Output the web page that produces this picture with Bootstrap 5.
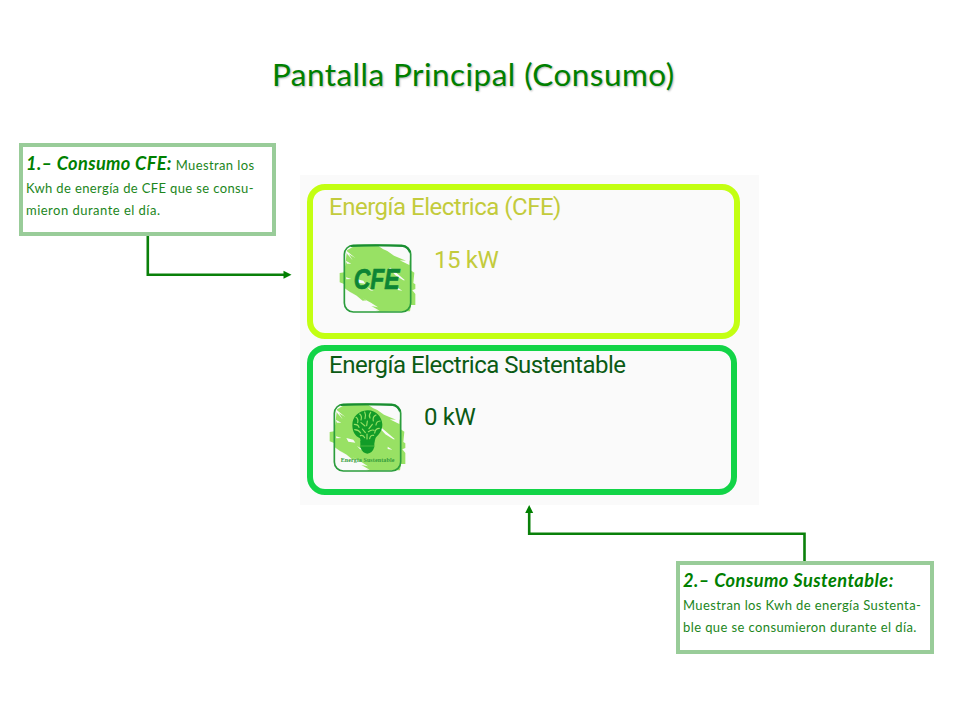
<!DOCTYPE html>
<html lang="es">
<head>
<meta charset="utf-8">
<meta name="viewport" content="width=device-width, initial-scale=1">
<title>Pantalla Principal (Consumo)</title>
<link href="https://cdn.jsdelivr.net/npm/bootstrap@5.3.0/dist/css/bootstrap.min.css" rel="stylesheet">
<style>
body{font-family:Lato,"Liberation Sans",sans-serif;color:#0a800a;background:#fff;width:962px;height:716px;overflow:hidden}
svg{display:block;flex:none}
.slide-title{font-size:31.5px;line-height:40px;padding-top:54px;height:143px;padding-left:272px;color:#008000;letter-spacing:.45px;text-shadow:1px 1px 2px #b5b5b5;white-space:nowrap}
.note span,.note strong,.meter span{display:inline-block;white-space:nowrap}
.upper{height:362px;padding-left:19px}
.side{width:281px}
.note{border:4px solid #99cc99;background:#fff;height:93px;padding:4px 0 0 3px;font-size:13px;line-height:22px;letter-spacing:.4px;color:#1c861c}
.note strong{font-size:18.2px;font-style:italic;font-weight:700;color:#008000;letter-spacing:.45px}
.note-a{width:257px}
.note-a strong{letter-spacing:.35px}
.note-b{width:258px;margin-left:676px;padding-top:3px}
.note .first{height:26px;line-height:24px}
.note-a div:nth-child(2){letter-spacing:.37px}
.note-a div:nth-child(3){letter-spacing:.48px}
.panel{width:459px;height:330px;margin-top:32px;background:#fafafa;padding:9px 0 0 7px;font-family:Roboto,"Liberation Sans",sans-serif}
.meter{border:6px solid #c3ff12;border-radius:18px;color:#c3cb3c;font-size:24px;line-height:28px;letter-spacing:-.49px;padding:3px 0 0 16px}
.meter-a{width:433px;height:155px}
.meter-b{width:430px;height:150px;margin-top:6px;padding-top:0;border-color:#12d447;color:#0b5a14}
.meter svg{margin-top:18px;margin-left:6px}
.meter-a svg{margin-top:17px}
.meter-a .reading{margin:25px 0 0 14px;letter-spacing:-.4px}
.meter-b .reading{margin:24px 0 0 14px;letter-spacing:-.4px}
.meter-b svg{margin-left:-4px}
.link-b{margin-left:520px}
</style>
<script src="https://cdn.jsdelivr.net/npm/bootstrap@5.3.0/dist/js/bootstrap.bundle.min.js"></script>
</head>
<body>
<h1 class="slide-title fw-normal m-0">Pantalla Principal (Consumo)</h1>
<main>
  <section class="upper d-flex align-items-start">
    <div class="side">
      <div class="note note-a">
        <div class="first"><strong>1.– Consumo CFE:</strong> <span>Muestran los</span></div>
        <div><span>Kwh de energía de CFE que se consu-</span></div>
        <div><span>mieron durante el día.</span></div>
      </div>
      <svg width="281" height="50" viewBox="0 0 281 50"><path d="M128.800 0V38.700H266" fill="none" stroke="#0a800a" stroke-width="2.600"/><path d="M264.500 34.700l8 4-8 4z" fill="#008000"/></svg>
    </div>
    <div class="panel">
      <div class="meter meter-a">
        <span>Energía Electrica (CFE)</span>
        <div class="d-flex align-items-start">
          <svg width="85" height="80" viewBox="0 0 255 240">
            <g id="brush">
              <path fill="#98e164" d="M36 37L65 20 122 20 168 36 224 68 226 96 238 104 235 135 241 139 241 153 232 157 241 168 241 201 228 201 225 220 130 221 76 187 31 160 29 139 14 133 14 105 28 103Z"/>
              <path fill="#fafafa" d="M31 41L53 67 42 49 61 60 34 38ZM32 68L49 77 36 77ZM130 24L223 24 223 81 194 67 213 68 177 53 157 39 145 34ZM166 89L210 127 205 127 181 112 162 91ZM29 151L58 171 45 161 65 173 83 188 95 187 80 179 108 194 129 208 109 204 134 218 33 218ZM64 123L85 128 91 137 70 134ZM96 147L116 159 105 157ZM188 149L202 158 188 156ZM33 118L49 123 34 124Z"/>
              <rect x="28" y="22" width="199" height="200" rx="27" fill="none" stroke="#2b9d3d" stroke-width="5"/>
              <path d="M47 24Q127 20 204 24Q220 28 225 43" fill="none" stroke="#198d31" stroke-width="6"/>
            </g>
            <text x="56" y="153" textLength="138" lengthAdjust="spacingAndGlyphs" font-family="Liberation Sans,sans-serif" font-size="86" font-weight="700" font-style="italic" letter-spacing="0" fill="#0d8534" stroke="#0d8534" stroke-width="2">CFE</text>
          </svg>
          <span class="reading">15 kW</span>
        </div>
      </div>
      <div class="meter meter-b">
        <span>Energía Electrica Sustentable</span>
        <div class="d-flex align-items-start">
          <svg width="85" height="80" viewBox="0 0 255 240">
            <use href="#brush"/>
            <path fill="#129c28" d="M127 40C152 39 171 59 172 82C172 101 163 112 152 122L146 143 109 143 105 124C90 117 82 103 82 84C82 60 101 41 127 40Z"/>
            <path fill="#129c28" d="M106 132H148V150Q142 169 127 170Q112 169 106 150Z"/>
            <g fill="none" stroke="#98e164" stroke-width="3.500" stroke-linecap="round">
              <path d="M93 61Q101 66 98 77M104 51Q112 57 108 69M119 45Q124 54 120 65M137 46Q130 55 135 63M153 54Q142 59 145 72M165 72Q154 73 153 84M88 82Q100 82 102 91M108 77L120 87M127 72L125 86M142 82L132 95M89 98Q102 99 107 108M112 96L121 107M130 104Q140 97 147 100M163 94Q151 94 149 108M106 116Q115 113 119 122M126 111V126M146 115Q136 113 134 125"/>
            </g>
            <path d="M107 147H148" stroke="#67c64b" stroke-width="2"/>
            <text x="47" y="195" textLength="161" font-family="Liberation Serif,serif" font-size="18" font-weight="700" letter-spacing="0" fill="#339c3b">Energia Sustentable</text>
          </svg>
          <span class="reading">0 kW</span>
        </div>
      </div>
    </div>
  </section>
  <svg class="link-b" width="300" height="56" viewBox="0 0 300 56"><path d="M284.500 56V28.700H9.200V6" fill="none" stroke="#0a800a" stroke-width="2.600"/><path d="M5.200 8L9.200 0l4 8z" fill="#008000"/></svg>
  <div class="note note-b">
    <div class="first"><strong>2.– Consumo Sustentable:</strong></div>
    <div><span>Muestran los Kwh de energía Sustenta-</span></div>
    <div><span>ble que se consumieron durante el día.</span></div>
  </div>
</main>
</body>
</html>
